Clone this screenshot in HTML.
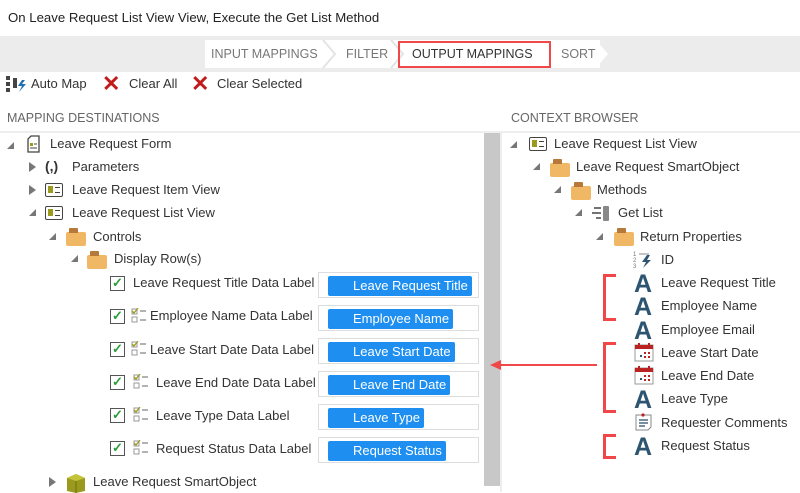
<!DOCTYPE html>
<html><head><style>
*{margin:0;padding:0;box-sizing:border-box}
body{width:800px;height:492px;overflow:hidden;background:#fff;font-family:"Liberation Sans",sans-serif;font-size:13px;color:#333;position:relative}
.a{position:absolute;white-space:nowrap}
.t{line-height:18px}
.tri{position:absolute;width:0;height:0}
.dn{border-left:7px solid transparent;border-bottom:7px solid #777}
.rt{border-top:5px solid transparent;border-bottom:5px solid transparent;border-left:7px solid #777}
.fold{position:absolute;width:20px;height:14px;background:#f0b865;border-radius:2px}
.fold:before{content:"";position:absolute;left:3px;top:-4px;width:9px;height:5px;background:#b7793a;border-radius:1px 1px 0 0}
.view{position:absolute;width:18px;height:14px;border:1.5px solid #444;border-radius:2px}
.view:before{content:"";position:absolute;left:2px;top:2px;width:5px;height:7px;background:#9a9a1e}
.view:after{content:"";position:absolute;left:9px;top:3px;width:5px;height:4px;border-top:1.5px solid #444;border-bottom:1.5px solid #444}
.cb{position:absolute;width:15px;height:15px;border:1.5px solid #555;color:#2a9d3a;font-size:13px;line-height:12px;text-align:center;font-weight:bold}
.dl{position:absolute;width:16px;height:16px}
.box{position:absolute;left:318px;width:161px;height:26px;border:1px solid #ddd;background:#fff;overflow:hidden}
.tag{position:absolute;left:9px;top:3px;height:20px;background:#1e8ff0;color:#fff;line-height:20px;padding:0 4px 0 25px;border-radius:2px;font-size:13px}
.A{position:absolute;font-weight:bold;font-size:25px;color:#2d5470;line-height:24px;font-family:"Liberation Sans",sans-serif}
.red{position:absolute;border:3px solid #f04848;border-right:none;width:13px}
</style></head><body>
<div class="a t" style="left:8px;top:9px;font-size:13.2px;color:#222">On Leave Request List View View, Execute the Get List Method</div>
<div class="a" style="left:0;top:36px;width:800px;height:36px;background:#ececec"></div>
<div class="a" style="left:205px;top:40px;width:395px;height:28px;background:#fff"></div>
<div class="a t" style="left:211px;top:45px;color:#777;font-size:12.5px">INPUT MAPPINGS</div>
<svg class="a" style="left:320px;top:40px" width="20" height="28"><polyline points="3,0 15,14 3,28" fill="none" stroke="#e4e4e4" stroke-width="2"/></svg>
<div class="a t" style="left:346px;top:45px;color:#777;font-size:12.5px">FILTER</div>
<svg class="a" style="left:388px;top:40px" width="20" height="28"><polyline points="3,0 15,14 3,28" fill="none" stroke="#e4e4e4" stroke-width="2"/></svg>
<div class="a" style="left:398px;top:41px;width:153px;height:27px;border:2px solid #f04848"></div>
<div class="a t" style="left:412px;top:45px;color:#333;font-size:12.5px">OUTPUT MAPPINGS</div>
<div class="a t" style="left:561px;top:45px;color:#777;font-size:12.5px">SORT</div>
<svg class="a" style="left:596px;top:40px" width="14" height="28"><polygon points="0,0 12,14 0,28" fill="#fff"/></svg>
<svg class="a" style="left:5px;top:75px" width="22" height="18"><rect x="1" y="1" width="4" height="4" fill="#444"/><rect x="1" y="7" width="4" height="4" fill="#444"/><rect x="1" y="13" width="4" height="4" fill="#444"/><rect x="8" y="3" width="4" height="10" fill="#444"/><path d="M17 5 L13 11 H17 L14 17 L21 9 H17 L20 5Z" fill="#1e6fb0"/></svg>
<div class="a t" style="left:31px;top:75px">Auto Map</div>
<div class="a" style="left:102px;top:72px;font-size:22px;color:#c21b1b;font-weight:bold;line-height:24px">✕</div>
<div class="a t" style="left:129px;top:75px">Clear All</div>
<div class="a" style="left:191px;top:72px;font-size:22px;color:#c21b1b;font-weight:bold;line-height:24px">✕</div>
<div class="a t" style="left:217px;top:75px">Clear Selected</div>
<div class="a t" style="left:7px;top:109px;color:#666;font-size:12.5px">MAPPING DESTINATIONS</div>
<div class="a t" style="left:511px;top:109px;color:#666;font-size:12.5px">CONTEXT BROWSER</div>
<div class="a" style="left:0;top:131px;width:800px;height:2px;background:#eee"></div>
<div class="a" style="left:484px;top:133px;width:16px;height:353px;background:#c8c8c8"></div>
<div class="a" style="left:500px;top:133px;width:2px;height:359px;background:#eee"></div>

<div class="tri dn" style="left:7px;top:142px"></div>
<svg class="a" style="left:27px;top:135px" width="14" height="18"><path d="M4 1 H12 V17 H1 V4Z" fill="#fff" stroke="#444" stroke-width="1.3"/><rect x="3" y="8" width="3" height="3" fill="#9a9a1e"/><line x1="7" y1="9" x2="10" y2="9" stroke="#444"/><line x1="3" y1="13" x2="10" y2="13" stroke="#444"/></svg>
<div class="a t" style="left:50px;top:135px">Leave Request Form</div>
<div class="tri rt" style="left:29px;top:162px"></div>
<div class="a t" style="left:45px;top:157px;font-weight:bold;font-size:14px">(,)</div>
<div class="a t" style="left:72px;top:158px">Parameters</div>
<div class="tri rt" style="left:29px;top:185px"></div>
<div class="view" style="left:45px;top:183px"></div>
<div class="a t" style="left:72px;top:181px">Leave Request Item View</div>
<div class="tri dn" style="left:29px;top:209px"></div>
<div class="view" style="left:45px;top:206px"></div>
<div class="a t" style="left:72px;top:204px">Leave Request List View</div>
<div class="tri dn" style="left:49px;top:233px"></div>
<div class="fold" style="left:66px;top:232px"></div>
<div class="a t" style="left:93px;top:228px">Controls</div>
<div class="tri dn" style="left:71px;top:255px"></div>
<div class="fold" style="left:87px;top:255px"></div>
<div class="a t" style="left:114px;top:250px">Display Row(s)</div>

<div class="cb" style="left:110px;top:276px">✓</div>
<div class="a t" style="left:133px;top:274px">Leave Request Title Data Label</div>
<div class="box" style="top:272px"><div class="tag">Leave Request Title</div></div>

<div class="cb" style="left:110px;top:309px">✓</div>
<svg class="dl" style="left:131px;top:308px"><rect x="1" y="1" width="5" height="5" fill="none" stroke="#999"/><path d="M1 3 L3 5 L7 0" stroke="#9a9a1e" fill="none" stroke-width="1.3"/><rect x="1" y="9" width="5" height="5" fill="none" stroke="#999"/><line x1="9" y1="3" x2="15" y2="3" stroke="#666"/><line x1="9" y1="12" x2="15" y2="12" stroke="#666"/></svg>
<div class="a t" style="left:150px;top:307px">Employee Name Data Label</div>
<div class="box" style="top:305px"><div class="tag">Employee Name</div></div>

<div class="cb" style="left:110px;top:342px">✓</div>
<svg class="dl" style="left:131px;top:341px"><rect x="1" y="1" width="5" height="5" fill="none" stroke="#999"/><path d="M1 3 L3 5 L7 0" stroke="#9a9a1e" fill="none" stroke-width="1.3"/><rect x="1" y="9" width="5" height="5" fill="none" stroke="#999"/><line x1="9" y1="3" x2="15" y2="3" stroke="#666"/><line x1="9" y1="12" x2="15" y2="12" stroke="#666"/></svg>
<div class="a t" style="left:150px;top:341px">Leave Start Date Data Label</div>
<div class="box" style="top:338px"><div class="tag">Leave Start Date</div></div>

<div class="cb" style="left:110px;top:375px">✓</div>
<svg class="dl" style="left:133px;top:374px"><rect x="1" y="1" width="5" height="5" fill="none" stroke="#999"/><path d="M1 3 L3 5 L7 0" stroke="#9a9a1e" fill="none" stroke-width="1.3"/><rect x="1" y="9" width="5" height="5" fill="none" stroke="#999"/><line x1="9" y1="3" x2="15" y2="3" stroke="#666"/><line x1="9" y1="12" x2="15" y2="12" stroke="#666"/></svg>
<div class="a t" style="left:156px;top:374px">Leave End Date Data Label</div>
<div class="box" style="top:371px"><div class="tag">Leave End Date</div></div>

<div class="cb" style="left:110px;top:408px">✓</div>
<svg class="dl" style="left:133px;top:407px"><rect x="1" y="1" width="5" height="5" fill="none" stroke="#999"/><path d="M1 3 L3 5 L7 0" stroke="#9a9a1e" fill="none" stroke-width="1.3"/><rect x="1" y="9" width="5" height="5" fill="none" stroke="#999"/><line x1="9" y1="3" x2="15" y2="3" stroke="#666"/><line x1="9" y1="12" x2="15" y2="12" stroke="#666"/></svg>
<div class="a t" style="left:156px;top:407px">Leave Type Data Label</div>
<div class="box" style="top:404px"><div class="tag">Leave Type</div></div>

<div class="cb" style="left:110px;top:441px">✓</div>
<svg class="dl" style="left:133px;top:440px"><rect x="1" y="1" width="5" height="5" fill="none" stroke="#999"/><path d="M1 3 L3 5 L7 0" stroke="#9a9a1e" fill="none" stroke-width="1.3"/><rect x="1" y="9" width="5" height="5" fill="none" stroke="#999"/><line x1="9" y1="3" x2="15" y2="3" stroke="#666"/><line x1="9" y1="12" x2="15" y2="12" stroke="#666"/></svg>
<div class="a t" style="left:156px;top:440px">Request Status Data Label</div>
<div class="box" style="top:437px"><div class="tag">Request Status</div></div>

<div class="tri rt" style="left:49px;top:477px"></div>
<svg class="a" style="left:66px;top:473px" width="20" height="20"><polygon points="10,1 19,5 19,18 10,20 1,18 1,5" fill="#9a9a1e"/><polygon points="10,1 19,5 10,8 1,5" fill="#c4c43a"/><line x1="10" y1="8" x2="10" y2="20" stroke="#6d6d10"/></svg>
<div class="a t" style="left:93px;top:473px">Leave Request SmartObject</div>

<div class="tri dn" style="left:510px;top:141px"></div>
<div class="view" style="left:529px;top:137px"></div>
<div class="a t" style="left:554px;top:135px">Leave Request List View</div>
<div class="tri dn" style="left:533px;top:163px"></div>
<div class="fold" style="left:550px;top:163px"></div>
<div class="a t" style="left:576px;top:158px">Leave Request SmartObject</div>
<div class="tri dn" style="left:554px;top:186px"></div>
<div class="fold" style="left:571px;top:186px"></div>
<div class="a t" style="left:597px;top:181px">Methods</div>
<div class="tri dn" style="left:575px;top:209px"></div>
<svg class="a" style="left:592px;top:205px" width="20" height="17"><line x1="2" y1="3" x2="9" y2="3" stroke="#444" stroke-width="1.5"/><line x1="0" y1="8" x2="9" y2="8" stroke="#444" stroke-width="1.5"/><line x1="4" y1="13" x2="9" y2="13" stroke="#444" stroke-width="1.5"/><rect x="11" y="1" width="6" height="15" fill="#888" rx="1"/></svg>
<div class="a t" style="left:618px;top:204px">Get List</div>
<div class="tri dn" style="left:596px;top:233px"></div>
<div class="fold" style="left:614px;top:232px"></div>
<div class="a t" style="left:640px;top:228px">Return Properties</div>
<svg class="a" style="left:633px;top:249px" width="20" height="20"><text x="0" y="7" font-size="6" fill="#777" font-family="Liberation Sans">1</text><text x="0" y="13" font-size="6" fill="#777" font-family="Liberation Sans">2</text><text x="0" y="19" font-size="6" fill="#777" font-family="Liberation Sans">3</text><line x1="6" y1="5" x2="16" y2="5" stroke="#888"/><path d="M14 6 L9 13 H13 L10 19 L18 11 H14 L17 6Z" fill="#2d5470"/></svg>
<div class="a t" style="left:661px;top:251px">ID</div>

<div class="A" style="left:634px;top:272px">A</div><div class="a t" style="left:661px;top:274px">Leave Request Title</div>
<div class="A" style="left:634px;top:295px">A</div><div class="a t" style="left:661px;top:297px">Employee Name</div>
<div class="A" style="left:634px;top:319px">A</div><div class="a t" style="left:661px;top:321px">Employee Email</div>
<svg class="a" style="left:634px;top:342px" width="20" height="20"><rect x="1" y="3" width="18" height="16" fill="#fff" stroke="#999"/><rect x="1" y="3" width="18" height="4" fill="#b22"/><rect x="4" y="1" width="2" height="4" fill="#b22"/><rect x="14" y="1" width="2" height="4" fill="#b22"/><rect x="6" y="13" width="2" height="2" fill="#2d5470"/><rect x="10" y="10" width="2" height="2" fill="#b22"/><rect x="10" y="14" width="2" height="2" fill="#b22"/><rect x="14" y="10" width="2" height="2" fill="#b22"/><rect x="14" y="14" width="2" height="2" fill="#b22"/></svg>
<div class="a t" style="left:661px;top:344px">Leave Start Date</div>
<svg class="a" style="left:634px;top:365px" width="20" height="20"><rect x="1" y="3" width="18" height="16" fill="#fff" stroke="#999"/><rect x="1" y="3" width="18" height="4" fill="#b22"/><rect x="4" y="1" width="2" height="4" fill="#b22"/><rect x="14" y="1" width="2" height="4" fill="#b22"/><rect x="6" y="13" width="2" height="2" fill="#2d5470"/><rect x="10" y="10" width="2" height="2" fill="#b22"/><rect x="10" y="14" width="2" height="2" fill="#b22"/><rect x="14" y="10" width="2" height="2" fill="#b22"/><rect x="14" y="14" width="2" height="2" fill="#b22"/></svg>
<div class="a t" style="left:661px;top:367px">Leave End Date</div>
<div class="A" style="left:634px;top:388px">A</div><div class="a t" style="left:661px;top:390px">Leave Type</div>
<svg class="a" style="left:634px;top:412px" width="20" height="20"><path d="M2 3 H17 V15 L14 18 H2Z" fill="#fff" stroke="#888"/><circle cx="9" cy="3" r="1.6" fill="#b22"/><line x1="5" y1="8" x2="14" y2="8" stroke="#2d5470" stroke-width="1.3"/><line x1="5" y1="11" x2="14" y2="11" stroke="#2d5470" stroke-width="1.3"/><line x1="5" y1="14" x2="11" y2="14" stroke="#2d5470" stroke-width="1.3"/></svg>
<div class="a t" style="left:661px;top:414px">Requester Comments</div>
<div class="A" style="left:634px;top:435px">A</div><div class="a t" style="left:661px;top:437px">Request Status</div>

<div class="red" style="left:603px;top:274px;height:47px"></div>
<div class="red" style="left:603px;top:342px;height:71px"></div>
<div class="red" style="left:603px;top:434px;height:25px"></div>
<div class="a" style="left:499px;top:364px;width:98px;height:2px;background:#f04848"></div>
<svg class="a" style="left:490px;top:359px" width="12" height="12"><polygon points="0,6 11,1 11,11" fill="#f04848"/></svg>
</body></html>
